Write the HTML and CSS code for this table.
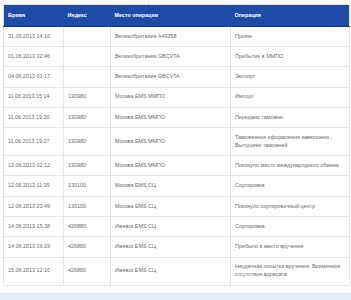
FILE: index.html
```html
<!DOCTYPE html>
<html lang="ru">
<head>
  <meta charset="UTF-8">
  <title>Отслеживание отправления</title>
  <link rel="stylesheet" href="styles.css">
</head>
<body>
<div class="prev"></div>
<table class="track">
  <colgroup>
    <col class="col-date">
    <col class="col-index">
    <col class="col-place">
    <col class="col-op">
  </colgroup>
  <thead>
    <tr>
      <th>Время</th>
      <th>Индекс</th>
      <th>Место операции</th>
      <th>Операция</th>
    </tr>
  </thead>
  <tbody>
    <tr><td>31.05.2013 14:16</td><td></td><td>Великобритания A49358</td><td>Приём</td></tr>
    <tr><td>01.06.2013 02:46</td><td></td><td>Великобритания GBCVTA</td><td>Прибытие в ММПО</td></tr>
    <tr><td>04.06.2013 03:17</td><td></td><td>Великобритания GBCVTA</td><td>Экспорт</td></tr>
    <tr><td>11.06.2013 15:14</td><td>130980</td><td>Москва EMS ММПО</td><td>Импорт</td></tr>
    <tr><td>11.06.2013 19:20</td><td>130980</td><td>Москва EMS ММПО</td><td>Передано таможне</td></tr>
    <tr><td>11.06.2013 19:27</td><td>130980</td><td>Москва EMS ММПО</td><td>Таможенное оформление завершено ,<br>Выпущено таможней</td></tr>
    <tr><td>12.06.2013 02:12</td><td>130980</td><td>Москва EMS ММПО</td><td>Покинуло место международного обмена</td></tr>
    <tr><td>12.06.2013 11:39</td><td>130100</td><td>Москва EMS СЦ</td><td>Сортировка</td></tr>
    <tr><td>12.06.2013 23:49</td><td>130100</td><td>Москва EMS СЦ</td><td>Покинуло сортировочный центр</td></tr>
    <tr><td>14.06.2013 15:38</td><td>426880</td><td>Ижевск EMS СЦ</td><td>Сортировка</td></tr>
    <tr><td>14.06.2013 16:29</td><td>426880</td><td>Ижевск EMS СЦ</td><td>Прибыло в место вручения</td></tr>
    <tr><td>15.06.2013 12:10</td><td>426880</td><td>Ижевск EMS СЦ</td><td>Неудачная попытка вручения, Временное<br>отсутствие адресата</td></tr>
  </tbody>
</table>
<div class="footer-band"></div>
</body>
</html>
```

FILE: styles.css
```css
body {
  margin: 0;
  background: #fff;
  font-family: "Liberation Sans", Arial, sans-serif;
  font-size: 5.4px;
  line-height: 7.7px;
  color: #6b6b6b;
  overflow: hidden;
}
.prev {
  width: 145px;
  height: 4px;
  margin-left: 3px;
  border-right: 1px solid #e4e4e4;
}
.track {
  width: 346px;
  margin-left: 3px;
  border-collapse: collapse;
  table-layout: fixed;
  border: 1px solid #e2e2e2;
}
.col-date { width: 60px; }
.col-index { width: 47px; }
.col-place { width: 120px; }
.col-op { width: 119px; }
.track th {
  background: #1d4ba6;
  color: #fff;
  font-weight: bold;
  text-align: left;
  padding: 6.5px 4px;
  border-bottom: 1px solid #0f3b8e;
}
.track td {
  padding: 5.8px 4px;
  border: 1px solid #e6e6e6;
  vertical-align: middle;
  white-space: nowrap;
}
.footer-band {
  height: 6px;
  margin-top: 7px;
  background: #e6eef9;
  border-top: 1px solid #dbe4f2;
}
```
